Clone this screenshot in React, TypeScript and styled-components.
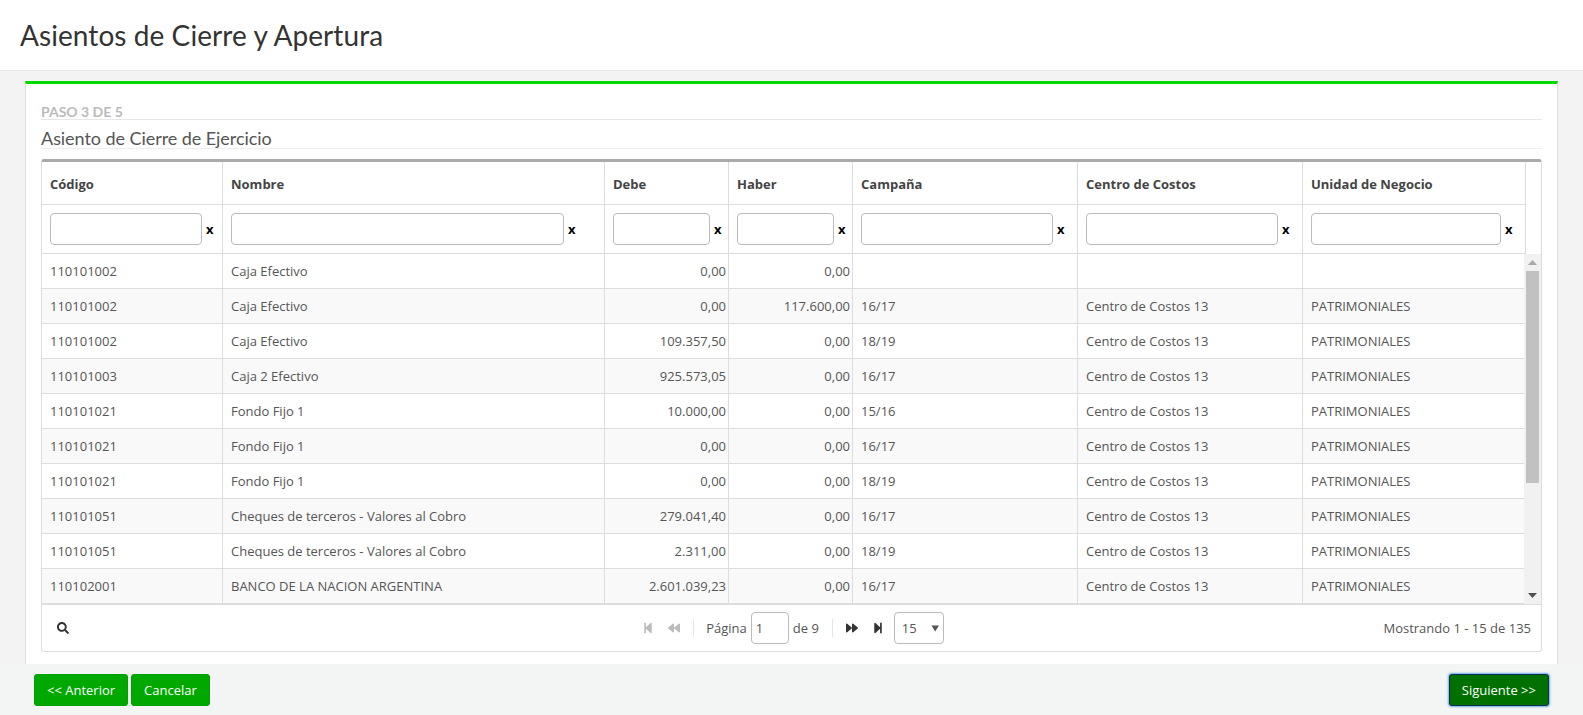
import React from 'react';
import styled, { createGlobalStyle } from 'styled-components';
import { FaBackward, FaForward, FaSearch, FaStepBackward, FaStepForward } from 'react-icons/fa';

const selectArrow = `url("data:image/svg+xml,%3Csvg xmlns='http://www.w3.org/2000/svg' width='9' height='7'%3E%3Cpath d='M0.5 0.5H8L4.2 6.5z' fill='%23555'/%3E%3C/svg%3E")`;

const GlobalStyle = createGlobalStyle`
  html, body {
    margin: 0;
    padding: 0;
    background: #f3f3f3;
    overflow: hidden;
  }
  * {
    box-sizing: border-box;
  }
`;

const Page = styled.div`
  display: flex;
  flex-direction: column;
  height: 715px;
  font-family: 'Open Sans', sans-serif;
  font-size: 13px;
  color: #555;
`;

const Header = styled.header`
  height: 71px;
  padding-left: 20px;
  display: flex;
  align-items: center;
  flex-shrink: 0;
  background: #fff;
  border-bottom: 1px solid #e7e7e7;
`;

const Title = styled.h1`
  margin: 0 0 1px;
  font-family: 'Lato', sans-serif;
  font-size: 28px;
  font-weight: 400;
  letter-spacing: 0.07px;
  color: #333;
`;

const Card = styled.section`
  margin: 10px 25px 0;
  height: 583px;
  padding: 0 15px;
  flex-shrink: 0;
  background: #fff;
  border: 1px solid #ddd;
  border-top: 3px solid #00d900;
  border-bottom: 0;
`;

const StepLabel = styled.div`
  height: 36px;
  padding-top: 19px;
  line-height: 17px;
  font-family: 'Lato', sans-serif;
  font-size: 14px;
  font-weight: 700;
  color: #bbb;
  border-bottom: 1px solid #e7e7e7;
`;

const SectionTitle = styled.h2`
  margin: 0;
  height: 29px;
  padding-top: 7px;
  line-height: 22px;
  font-family: 'Lato', sans-serif;
  font-size: 18px;
  font-weight: 400;
  letter-spacing: -0.06px;
  color: #555;
  border-bottom: 1px solid #eee;
`;

const Grid = styled.div`
  margin-top: 10px;
  border: 1px solid #ddd;
  border-top: 3px solid #aaa;
  border-radius: 3px;
  overflow: hidden;
`;

const Table = styled.table<{ $width: number }>`
  width: ${({ $width }) => $width}px;
  table-layout: fixed;
  border-collapse: separate;
  border-spacing: 0;
`;

const Col = styled.col<{ $width: number }>`
  width: ${({ $width }) => $width}px;
`;

const HeadCell = styled.th`
  height: 43px;
  padding: 2px 8px 0;
  text-align: left;
  font-size: 13px;
  font-weight: 700;
  color: #444;
  border-right: 1px solid #ddd;
  border-bottom: 1px solid #ddd;
`;

const FilterCell = styled.td`
  height: 49px;
  padding: 0 8px;
  border-right: 1px solid #ddd;
  border-bottom: 1px solid #ddd;
`;

const FilterWrap = styled.div`
  display: flex;
  align-items: center;
  gap: 4px;
`;

const FilterInput = styled.input<{ $width: number }>`
  width: ${({ $width }) => $width}px;
  height: 32px;
  flex-shrink: 0;
  border: 1px solid #bbb;
  border-radius: 4px;
  background: #fff;
`;

const ClearMark = styled.span`
  font-size: 13px;
  font-weight: 700;
  color: #000;
`;

const BodyArea = styled.div`
  height: 350px;
  display: flex;
`;

const BodyRows = styled.div`
  flex: 1;
  min-width: 0;
  overflow: hidden;
`;

const ScrollTrack = styled.div`
  width: 17px;
  flex-shrink: 0;
  display: flex;
  flex-direction: column;
  background: #f1f1f1;
`;

const ScrollButton = styled.div`
  height: 17px;
  flex-shrink: 0;
  display: flex;
  align-items: center;
  justify-content: center;
`;

const ScrollThumb = styled.div<{ $height: number }>`
  height: ${({ $height }) => $height}px;
  margin: 0 2px;
  background: #c1c1c1;
`;

const ScrollSpacer = styled.div`
  flex: 1;
`;

const Row = styled.tr`
  &:nth-child(even) td {
    background: #f9f9f9;
  }
`;

const Cell = styled.td<{ $numeric?: boolean }>`
  height: 35px;
  padding: ${({ $numeric }) => ($numeric ? '0 2px 0 8px' : '0 8px')};
  text-align: ${({ $numeric }) => ($numeric ? 'right' : 'left')};
  white-space: nowrap;
  overflow: hidden;
  border-right: 1px solid #ddd;
  border-bottom: 1px solid #ddd;

  &:last-child {
    border-right: 0;
  }
`;

const GridFooter = styled.div`
  height: 47px;
  padding: 0 10px 0 15px;
  display: grid;
  grid-template-columns: 1fr auto 1fr;
  align-items: center;
  border-top: 1px solid #ddd;
`;

const SearchButton = styled.span`
  display: flex;
  font-size: 12px;
  color: #333;
`;

const Pager = styled.div`
  display: flex;
  align-items: center;
  height: 32px;
  margin-left: -2px;
  white-space: nowrap;
`;

const PagerIcon = styled.span<{ $disabled?: boolean; $gap: number }>`
  display: flex;
  margin-right: ${({ $gap }) => $gap}px;
  font-size: 12px;
  color: ${({ $disabled }) => ($disabled ? '#bbb' : '#333')};
`;

const PagerDivider = styled.span<{ $left: number; $right: number }>`
  width: 1px;
  height: 18px;
  margin: 0 ${({ $right }) => $right}px 0 ${({ $left }) => $left}px;
  background: #e4e4e4;
`;

const PageInput = styled.input`
  width: 38px;
  height: 32px;
  margin: 0 4px;
  padding: 0 4px;
  font: inherit;
  color: #555;
  border: 1px solid #bbb;
  border-radius: 4px;
`;

const PageSize = styled.select`
  width: 50px;
  height: 32px;
  padding: 0 0 0 7px;
  appearance: none;
  font: inherit;
  color: #555;
  border: 1px solid #bbb;
  border-radius: 4px;
  background: #fff ${selectArrow} no-repeat 36px 12px;
`;

const Summary = styled.div`
  text-align: right;
`;

const Actions = styled.footer`
  flex: 1;
  padding: 10px 34px 0;
  display: flex;
  gap: 3px;
  background: #f3f4f4;
`;

const ActionButton = styled.button<{ $primary?: boolean }>`
  height: 32px;
  padding: 0 12px;
  font-family: 'Open Sans', sans-serif;
  font-size: 13px;
  white-space: nowrap;
  color: #fff;
  border: 1px solid ${({ $primary }) => ($primary ? '#06314f' : '#00a000')};
  border-radius: 3px;
  background: ${({ $primary }) => ($primary ? '#007000' : '#00a800')};
  box-shadow: ${({ $primary }) => ($primary ? '0 0 2px 1px #6ea8e8' : 'none')};
  margin-left: ${({ $primary }) => ($primary ? 'auto' : '0')};
`;

const columns = [
  { title: 'Código', width: 181, input: 152 },
  { title: 'Nombre', width: 382, input: 333 },
  { title: 'Debe', width: 124, input: 97 },
  { title: 'Haber', width: 124, input: 97 },
  { title: 'Campaña', width: 225, input: 192 },
  { title: 'Centro de Costos', width: 225, input: 192 },
  { title: 'Unidad de Negocio', width: 223, input: 190 },
];

const rows = [
  ['110101002', 'Caja Efectivo', '0,00', '0,00', '', '', ''],
  ['110101002', 'Caja Efectivo', '0,00', '117.600,00', '16/17', 'Centro de Costos 13', 'PATRIMONIALES'],
  ['110101002', 'Caja Efectivo', '109.357,50', '0,00', '18/19', 'Centro de Costos 13', 'PATRIMONIALES'],
  ['110101003', 'Caja 2 Efectivo', '925.573,05', '0,00', '16/17', 'Centro de Costos 13', 'PATRIMONIALES'],
  ['110101021', 'Fondo Fijo 1', '10.000,00', '0,00', '15/16', 'Centro de Costos 13', 'PATRIMONIALES'],
  ['110101021', 'Fondo Fijo 1', '0,00', '0,00', '16/17', 'Centro de Costos 13', 'PATRIMONIALES'],
  ['110101021', 'Fondo Fijo 1', '0,00', '0,00', '18/19', 'Centro de Costos 13', 'PATRIMONIALES'],
  ['110101051', 'Cheques de terceros - Valores al Cobro', '279.041,40', '0,00', '16/17', 'Centro de Costos 13', 'PATRIMONIALES'],
  ['110101051', 'Cheques de terceros - Valores al Cobro', '2.311,00', '0,00', '18/19', 'Centro de Costos 13', 'PATRIMONIALES'],
  ['110102001', 'BANCO DE LA NACION ARGENTINA', '2.601.039,23', '0,00', '16/17', 'Centro de Costos 13', 'PATRIMONIALES'],
];

export default function App() {
  const bodyWidths = columns.map((c, i) => (i === columns.length - 1 ? c.width - 2 : c.width));

  return (
    <Page>
      <GlobalStyle />
      <Header>
        <Title>Asientos de Cierre y Apertura</Title>
      </Header>
      <Card>
        <StepLabel>PASO 3 DE 5</StepLabel>
        <SectionTitle>Asiento de Cierre de Ejercicio</SectionTitle>
        <Grid>
          <Table $width={1484}>
            <colgroup>
              {columns.map(c => (
                <Col key={c.title} $width={c.width} />
              ))}
            </colgroup>
            <thead>
              <tr>
                {columns.map(c => (
                  <HeadCell key={c.title}>{c.title}</HeadCell>
                ))}
              </tr>
              <tr>
                {columns.map(c => (
                  <FilterCell key={c.title}>
                    <FilterWrap>
                      <FilterInput $width={c.input} />
                      <ClearMark>x</ClearMark>
                    </FilterWrap>
                  </FilterCell>
                ))}
              </tr>
            </thead>
          </Table>
          <BodyArea>
            <BodyRows>
              <Table $width={1482}>
                <colgroup>
                  {bodyWidths.map((w, i) => (
                    <Col key={i} $width={w} />
                  ))}
                </colgroup>
                <tbody>
                  {rows.map((row, r) => (
                    <Row key={r}>
                      {row.map((value, i) => (
                        <Cell key={i} $numeric={i === 2 || i === 3}>
                          {value}
                        </Cell>
                      ))}
                    </Row>
                  ))}
                </tbody>
              </Table>
            </BodyRows>
            <ScrollTrack>
              <ScrollButton>
                <svg width="9" height="5" viewBox="0 0 9 5">
                  <path d="M4.5 0L9 5H0z" fill="#a8a8a8" />
                </svg>
              </ScrollButton>
              <ScrollThumb $height={212} />
              <ScrollSpacer />
              <ScrollButton>
                <svg width="9" height="5" viewBox="0 0 9 5">
                  <path d="M4.5 5L9 0H0z" fill="#505050" />
                </svg>
              </ScrollButton>
            </ScrollTrack>
          </BodyArea>
          <GridFooter>
            <SearchButton>
              <FaSearch />
            </SearchButton>
            <Pager>
              <PagerIcon $disabled $gap={14}>
                <FaStepBackward />
              </PagerIcon>
              <PagerIcon $disabled $gap={0}>
                <FaBackward />
              </PagerIcon>
              <PagerDivider $left={13} $right={12} />
              Página
              <PageInput defaultValue="1" />
              de 9
              <PagerDivider $left={13} $right={13} />
              <PagerIcon $gap={14}>
                <FaForward />
              </PagerIcon>
              <PagerIcon $gap={10}>
                <FaStepForward />
              </PagerIcon>
              <PageSize defaultValue="15">
                <option>15</option>
                <option>30</option>
              </PageSize>
            </Pager>
            <Summary>Mostrando 1 - 15 de 135</Summary>
          </GridFooter>
        </Grid>
      </Card>
      <Actions>
        <ActionButton>&lt;&lt; Anterior</ActionButton>
        <ActionButton>Cancelar</ActionButton>
        <ActionButton $primary>Siguiente &gt;&gt;</ActionButton>
      </Actions>
    </Page>
  );
}
